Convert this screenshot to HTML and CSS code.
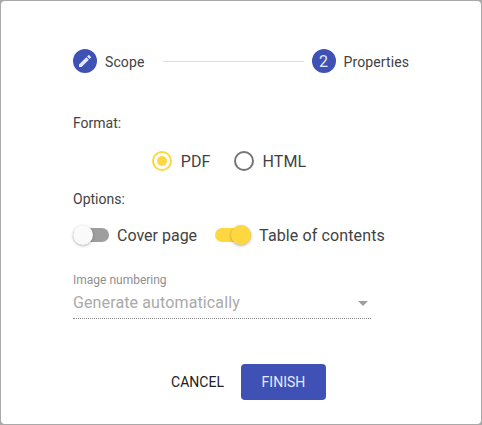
FILE: index.html
```html
<!DOCTYPE html>
<html lang="en">
<head>
<meta charset="utf-8">
<title>Export</title>
<link rel="stylesheet" href="styles.css">
</head>
<body>
<div class="dialog">
  <div class="stepper">
    <div class="step">
      <span class="step-badge">
        <svg viewBox="0 0 24 24" width="16" height="16"><path fill="currentColor" d="M3 17.25V21h3.75L17.81 9.94l-3.75-3.75L3 17.25zM20.71 7.04a1 1 0 0 0 0-1.41l-2.34-2.34a1 1 0 0 0-1.41 0l-1.83 1.83 3.75 3.75 1.83-1.83z"/></svg>
      </span>
      <span class="step-label">Scope</span>
    </div>
    <div class="step-line"></div>
    <div class="step">
      <span class="step-badge">2</span>
      <span class="step-label">Properties</span>
    </div>
  </div>
  <div class="section-label format-label">Format:</div>
  <div class="radios">
    <div class="radio"><span class="radio-ring on"><span class="radio-dot"></span></span><span>PDF</span></div>
    <div class="radio"><span class="radio-ring"></span><span>HTML</span></div>
  </div>
  <div class="section-label options-label">Options:</div>
  <div class="toggles">
    <div class="toggle-row"><span class="toggle"><span class="track"></span><span class="thumb"></span></span><span>Cover page</span></div>
    <div class="toggle-row"><span class="toggle on"><span class="track"></span><span class="thumb"></span></span><span class="wide">Table of contents</span></div>
  </div>
  <div class="field">
    <div class="field-label">Image numbering</div>
    <div class="field-value"><span class="wide">Generate automatically</span><span class="arrow"></span></div>
  </div>
  <div class="actions">
    <button class="btn btn-text" type="button">CANCEL</button>
    <button class="btn btn-primary" type="button">FINISH</button>
  </div>
</div>
</body>
</html>
```
FILE: styles.css
```css
* { box-sizing: border-box; }
html, body { margin: 0; height: 100%; }
body {
  background: #a9a9a9;
  padding: 1px;
  font-family: Roboto, "Liberation Sans", sans-serif;
  color: #424242;
  overflow: hidden;
}
.dialog {
  height: 423px;
  background: #fff;
  border-radius: 4px;
  padding: 48px 72px 0;
}
.stepper { display: flex; align-items: center; height: 24px; }
.step { display: flex; align-items: center; gap: 8px; font-size: 14px; }
.step-badge {
  width: 24px; height: 24px; border-radius: 50%;
  background: #3f51b5; color: #e6e8f5;
  display: flex; align-items: center; justify-content: center;
  font-size: 16px;
}
.step-label { letter-spacing: 0.1px; padding-top: 2px; }
.step-line { flex: 1; height: 1px; background: #e0e0e0; margin: 0 8px 0 19px; }
.section-label { font-size: 14px; line-height: 16px; }
.format-label { margin-top: 42px; }
.radios { display: flex; justify-content: center; gap: 23px; margin-top: 20px; margin-right: 24px; font-size: 16px; letter-spacing: 0.1px; }
.radio { display: flex; align-items: center; gap: 9px; height: 20px; }
.radio-ring {
  width: 20px; height: 20px; border-radius: 50%;
  border: 2px solid #757575;
  display: flex; align-items: center; justify-content: center;
}
.radio-ring.on { border-color: #ffd740; }
.radio-dot { width: 10px; height: 10px; border-radius: 50%; background: #ffd740; }
.options-label { margin-top: 20px; }
.toggles { display: flex; gap: 18px; margin-top: 18px; font-size: 16px; }
.wide { letter-spacing: 0.12px; }
.toggle-row { display: flex; align-items: center; gap: 8px; height: 20px; }
.toggle { position: relative; display: block; width: 36px; height: 20px; }
.track { position: absolute; left: 0; right: 0; top: 3px; height: 14px; border-radius: 7px; background: #9e9e9e; }
.thumb {
  position: absolute; left: 0; top: 0; width: 20px; height: 20px; border-radius: 50%;
  background: #fafafa; box-shadow: 0 1px 3px rgba(0,0,0,.3);
}
.toggle.on .track { background: #ffd740; }
.toggle.on .thumb { left: 16px; background: #ffd740; }
.field { margin-top: 28px; width: 298px; }
.field-label { font-size: 12px; line-height: 14px; color: #8f8f8f; }
.field-value {
  display: flex; align-items: center; justify-content: space-between;
  font-size: 16px; line-height: 22px; color: #aaa;
  padding: 5px 2px 4px 0; border-bottom: 1px dotted #8a8a8a;
}
.arrow { width: 0; height: 0; border: 5px solid transparent; border-top-color: #9e9e9e; border-bottom: 0; margin-right: 1px; }
.actions { display: flex; justify-content: center; align-items: center; gap: 6px; margin-top: 45px; margin-left: 4px; }
.btn { font: 400 14px/16px Roboto, "Liberation Sans", sans-serif; border: 0; border-radius: 4px; height: 36px; padding: 0 8px; background: none; }
.btn-text { color: #212121; padding: 0 11px; }
.btn-primary { background: #3f51b5; color: #e8eaf6; width: 85px; }
```
